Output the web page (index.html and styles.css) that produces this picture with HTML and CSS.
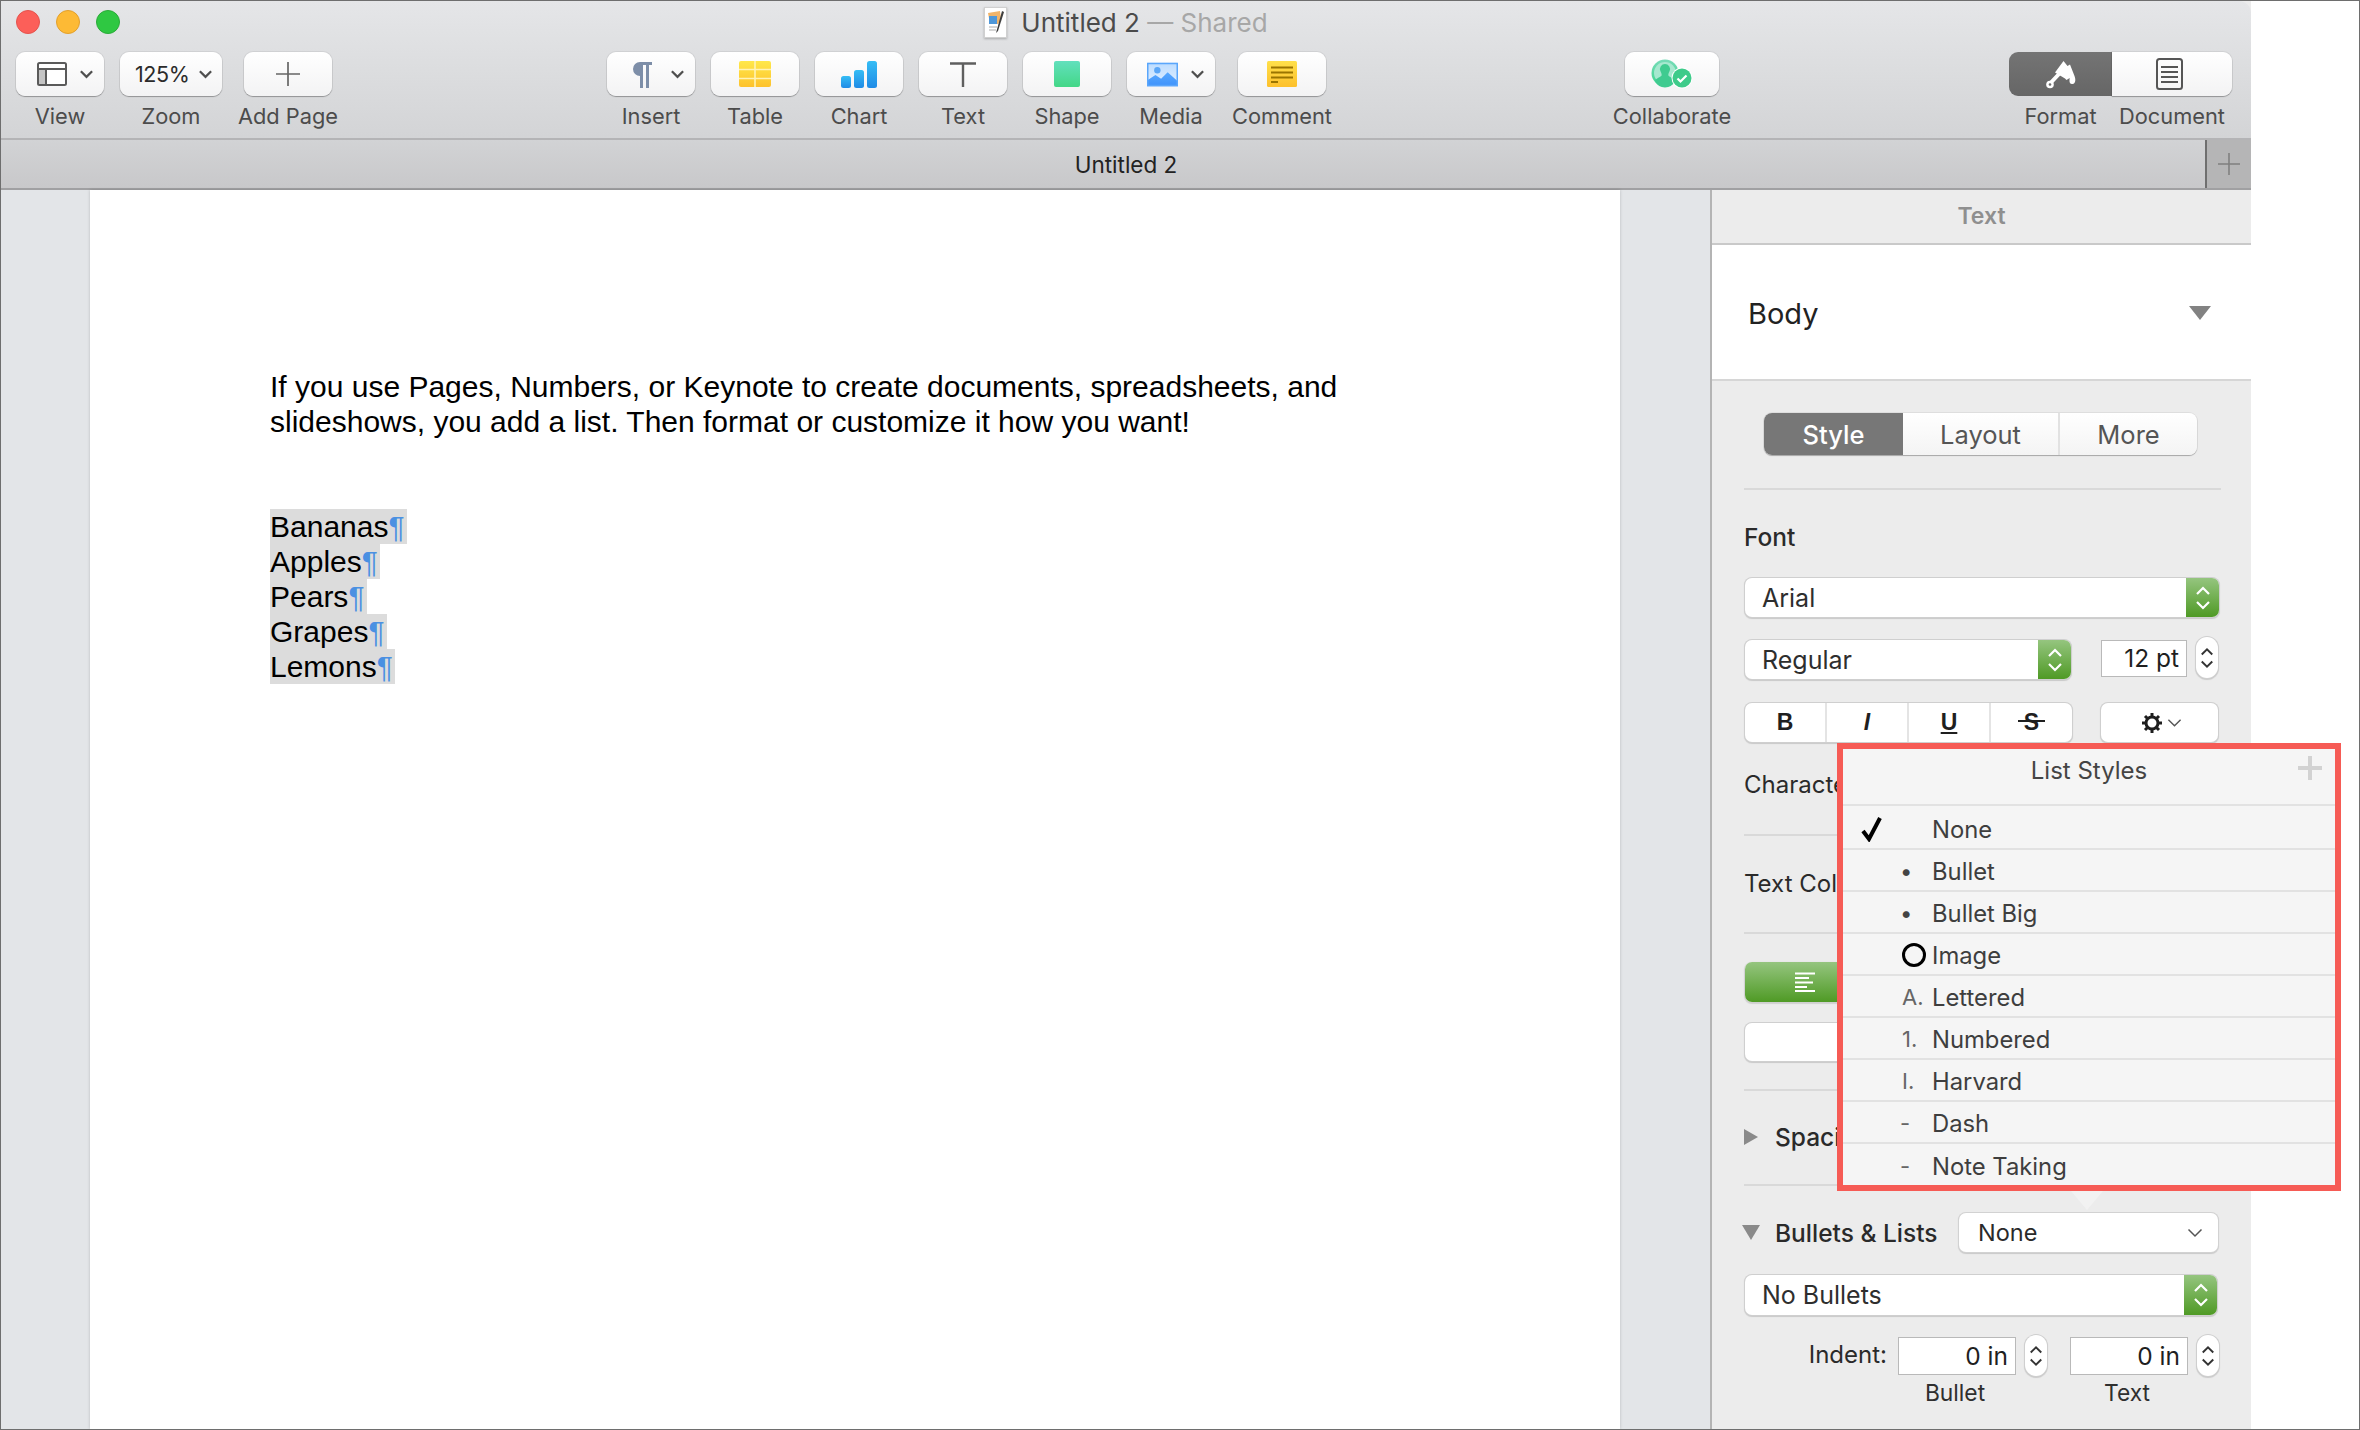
FILE: index.html
```html
<!DOCTYPE html>
<html lang="en">
<head>
<meta charset="utf-8">
<title>Untitled 2</title>
<link rel="stylesheet" href="styles.css">
</head>
<body>
<svg class="defs" width="0" height="0" aria-hidden="true">
  <defs>
    <symbol id="chev" viewBox="0 0 16 10"><path d="M2 2l6 6 6-6" fill="none" stroke="currentColor" stroke-width="2.4"/></symbol>
    <symbol id="chev-thin" viewBox="0 0 16 10"><path d="M1.500 1.500l6.500 6.500 6.500-6.500" fill="none" stroke="currentColor" stroke-width="1.500"/></symbol>
    <symbol id="updown" viewBox="0 0 16 28"><path d="M2 10l6-6 6 6M2 18l6 6 6-6" fill="none" stroke="currentColor" stroke-width="2.2"/></symbol>
    <symbol id="plus" viewBox="0 0 24 24"><path d="M12 0v24M0 12h24" fill="none" stroke="currentColor" stroke-width="1.7"/></symbol>
    <linearGradient id="gBars" x1="0" y1="0" x2="0" y2="1"><stop offset="0" stop-color="#35bdf5"/><stop offset="1" stop-color="#1f8be6"/></linearGradient>
    <linearGradient id="gShape" x1="0" y1="0" x2="0" y2="1"><stop offset="0" stop-color="#62e0bd"/><stop offset="1" stop-color="#43d787"/></linearGradient>
    <linearGradient id="gTable" x1="0" y1="0" x2="0" y2="1"><stop offset="0" stop-color="#ffe84a"/><stop offset="1" stop-color="#fdc22d"/></linearGradient>
    <linearGradient id="gNote" x1="0" y1="0" x2="0" y2="1"><stop offset="0" stop-color="#ffe04a"/><stop offset="1" stop-color="#fdc02c"/></linearGradient>
    <linearGradient id="gSky" x1="0" y1="0" x2="0" y2="1"><stop offset="0" stop-color="#bcdcff"/><stop offset="1" stop-color="#e2f0ff"/></linearGradient>
    <linearGradient id="gHill" x1="0" y1="0" x2="0" y2="1"><stop offset="0" stop-color="#58a9ff"/><stop offset="1" stop-color="#3f92fb"/></linearGradient>
    <linearGradient id="gColl" x1="0" y1="0" x2="0" y2="1"><stop offset="0" stop-color="#77dbb8"/><stop offset="1" stop-color="#3dd58e"/></linearGradient>
  </defs>
</svg>
<div class="frame">
  <div class="window">
    <header class="toolbar">
      <div class="titlebar">
        <div class="lights">
          <span class="light red"></span><span class="light yellow"></span><span class="light green"></span>
        </div>
        <div class="title">
          <svg class="doc-icon" width="23" height="31" viewBox="0 0 23 31">
            <rect x=".5" y=".5" width="22" height="30" fill="#fff" stroke="#d0d0d0"/>
            <path d="M4 6l12-2 1 8-3 5H6z" fill="#f1b46a"/>
            <rect x="5" y="9" width="8" height="8" fill="#4f97d8"/>
            <path d="M5 20h8M5 23h7" stroke="#c8c8c8" stroke-width="1.4"/>
            <path d="M18 4l2 1-6 19-2 2z" fill="#3f3f3f"/>
          </svg>
          <span class="title-name">Untitled 2</span><span class="title-shared"> — Shared</span>
        </div>
        <div></div>
      </div>
      <div class="tools">
        <div class="tool-group left">
          <div class="tool">
            <div class="btn split view-btn">
              <svg width="30" height="24" viewBox="0 0 30 24"><rect x="1" y="1" width="28" height="22" rx="1.5" fill="#fff" stroke="#5a5a5a" stroke-width="2"/><rect x="2" y="7" width="7" height="15" fill="#c4c4c4"/><path d="M1 7h28M9 7v16" stroke="#5a5a5a" stroke-width="2"/></svg>
              <svg class="chev" width="15" height="10"><use href="#chev"/></svg>
            </div>
            <span class="tool-label">View</span>
          </div>
          <div class="tool zoom">
            <div class="btn split zoom-btn"><span class="zoom-value">125%</span><svg class="chev" width="15" height="10"><use href="#chev"/></svg></div>
            <span class="tool-label">Zoom</span>
          </div>
          <div class="tool addpage">
            <div class="btn"><svg class="plus-icon" width="24" height="24"><use href="#plus"/></svg></div>
            <span class="tool-label">Add Page</span>
          </div>
        </div>
        <div class="tool-group middle">
          <div class="tool">
            <div class="btn split insert-btn">
              <svg width="25" height="27" viewBox="0 0 25 27"><path d="M10 1h14v3h-3v23h-3V4h-3v23h-3V15a7 7 0 0 1 0-14z" fill="#7d8ea8"/></svg>
              <svg class="chev" width="15" height="10"><use href="#chev"/></svg>
            </div>
            <span class="tool-label">Insert</span>
          </div>
          <div class="tool">
            <div class="btn">
              <svg width="32" height="26" viewBox="0 0 32 26"><rect width="32" height="26" rx="2" fill="url(#gTable)"/><path d="M0 8.5h32M0 17.5h32M16 0v26" stroke="#fff3b5" stroke-width="1.6"/></svg>
            </div>
            <span class="tool-label">Table</span>
          </div>
          <div class="tool">
            <div class="btn">
              <svg width="36" height="27" viewBox="0 0 36 27"><rect x="0" y="15" width="10" height="12" rx="2.5" fill="url(#gBars)"/><rect x="13" y="9" width="10" height="18" rx="2.5" fill="url(#gBars)"/><rect x="26" y="0" width="10" height="27" rx="2.5" fill="url(#gBars)"/></svg>
            </div>
            <span class="tool-label">Chart</span>
          </div>
          <div class="tool">
            <div class="btn">
              <svg width="26" height="25" viewBox="0 0 26 25"><path d="M0 1.5h26M13 1.5V25" fill="none" stroke="#5f5f5f" stroke-width="2.4"/></svg>
            </div>
            <span class="tool-label">Text</span>
          </div>
          <div class="tool">
            <div class="btn">
              <svg width="26" height="26" viewBox="0 0 26 26"><rect width="26" height="26" rx="2" fill="url(#gShape)"/></svg>
            </div>
            <span class="tool-label">Shape</span>
          </div>
          <div class="tool">
            <div class="btn split media-btn">
              <svg width="33" height="25" viewBox="0 0 33 25"><rect width="33" height="25" rx="1" fill="url(#gSky)"/><circle cx="11" cy="8" r="3.4" fill="#5aa6f7"/><path d="M0 19l9-6 6 4 7-7 11 10v5H0z" fill="url(#gHill)"/><rect x=".8" y=".8" width="31.4" height="23.4" fill="none" stroke="#5aa6fb" stroke-width="1.6"/></svg>
              <svg class="chev" width="15" height="10"><use href="#chev"/></svg>
            </div>
            <span class="tool-label">Media</span>
          </div>
          <div class="tool comment">
            <div class="btn">
              <svg width="30" height="26" viewBox="0 0 30 26"><rect width="30" height="26" rx="1.5" fill="url(#gNote)"/><path d="M4 6.5h22M4 11.5h22M4 16.5h22M4 21h7" stroke="#9a7400" stroke-width="2.2"/></svg>
            </div>
            <span class="tool-label">Comment</span>
          </div>
        </div>
        <div class="tool-group collab">
          <div class="tool collab-tool">
            <div class="btn">
              <svg width="42" height="30" viewBox="0 0 42 30"><circle cx="14" cy="14" r="13.5" fill="url(#gColl)"/><circle cx="14" cy="14" r="11" fill="#a6e8cf"/><path d="M14 5a5 5 0 0 1 4.6 7c-.6 1.6-1.3 2.6-1.3 4 0 2 5.6 2.6 6.7 6a11 11 0 0 1-20 0c1.100-3.400 6.700-4 6.700-6 0-1.400-.7-2.400-1.300-4A5 5 0 0 1 14 5z" fill="#3fcb90"/><circle cx="31" cy="19" r="10.500" fill="#fff"/><circle cx="31" cy="19" r="9.500" fill="#3ecb8a"/><path d="M26.500 19.500l3 3 6-6" fill="none" stroke="#fff" stroke-width="2.200"/></svg>
            </div>
            <span class="tool-label">Collaborate</span>
          </div>
        </div>
        <div class="tool-group mode">
          <div class="tool mode-format">
            <div class="btn mode-on">
              <svg width="30" height="29" viewBox="0 0 30 29"><path d="M13 14L5 22.500" stroke="#fff" stroke-width="4" stroke-linecap="round"/><circle cx="4" cy="24.500" r="3.800" fill="#fff"/><circle cx="4" cy="24.500" r="1.300" fill="#6b6b6b"/><path d="M9 12.500L17.500 1l4 5 2.500-1.500 4.500 11.500c1.200 3 1.500 7.500-2 8-2.500.300-3.300-2-3-4.500l.2-1.500-3.200 2-1.500-1.500z" fill="#fff"/></svg>
            </div>
            <span class="tool-label">Format</span>
          </div>
          <div class="tool mode-doc">
            <div class="btn mode-off">
              <svg width="27" height="32" viewBox="0 0 27 32"><rect x="1" y="1" width="25" height="30" rx="2.500" fill="none" stroke="#555" stroke-width="2"/><path d="M5 9h17M5 14h17M5 19h17M5 24h17" stroke="#555" stroke-width="2"/></svg>
            </div>
            <span class="tool-label">Document</span>
          </div>
        </div>
      </div>
    </header>

    <div class="tabbar">
      <div class="tab-title">Untitled 2</div>
      <div class="tab-add"><svg width="22" height="22"><use href="#plus"/></svg></div>
    </div>

    <main class="main">
      <section class="canvas">
        <article class="page">
          <p class="intro">If you use Pages, Numbers, or Keynote to create documents, spreadsheets, and<br>slideshows, you add a list. Then format or customize it how you want!</p>
          <ul class="picks">
            <li><span class="sel">Bananas<i class="pil">¶</i></span></li>
            <li><span class="sel">Apples<i class="pil">¶</i></span></li>
            <li><span class="sel">Pears<i class="pil">¶</i></span></li>
            <li><span class="sel">Grapes<i class="pil">¶</i></span></li>
            <li><span class="sel">Lemons<i class="pil">¶</i></span></li>
          </ul>
        </article>
      </section>

      <aside class="sidebar">
        <div class="side-head">Text</div>
        <div class="style-row">
          <span>Body</span>
          <svg width="22" height="14" viewBox="0 0 22 14"><path d="M0 0h22L11 14z" fill="#828282"/></svg>
        </div>
        <div class="side-body">
          <div class="seg">
            <span class="seg-item on">Style</span><span class="seg-item layout">Layout</span><span class="seg-item more">More</span>
          </div>
          <hr class="sep sep-a">
          <div class="strong font-label">Font</div>
          <div class="select font-sel"><span>Arial</span><span class="cap"><svg width="16" height="28"><use href="#updown"/></svg></span></div>
          <div class="font-row">
            <div class="select weight-sel"><span>Regular</span><span class="cap"><svg width="16" height="28"><use href="#updown"/></svg></span></div>
            <div class="field size-field">12 pt</div>
            <div class="stepper"><svg width="14" height="30" viewBox="0 0 16 28"><use href="#updown"/></svg></div>
          </div>
          <div class="format-row">
            <div class="bius">
              <span class="b">B</span><span class="i">I</span><span class="u">U</span><span class="s">S</span>
            </div>
            <div class="gear">
              <svg width="22" height="22" viewBox="0 0 22 22"><circle cx="11" cy="11" r="6" fill="none" stroke="#1e1e1e" stroke-width="3"/><path d="M11 1v4M11 17v4M1 11h4M17 11h4M4 4l3 3M15 15l3 3M18 4l-3 3M7 15l-3 3" stroke="#1e1e1e" stroke-width="3"/></svg>
              <svg class="chev-thin" width="15" height="10"><use href="#chev-thin"/></svg>
            </div>
          </div>
          <div class="label char-label">Character Styles</div>
          <hr class="sep sep-b">
          <div class="label color-label">Text Color</div>
          <hr class="sep sep-c">
          <div class="align-btn">
            <span class="align-on">
              <svg width="20" height="20" viewBox="0 0 20 20"><path d="M0 1.500h20M0 6h14M0 10.500h18M0 15h12M0 19h20" stroke="#fff" stroke-width="1.800"/></svg>
            </span>
          </div>
          <div class="blank-btn"></div>
          <hr class="sep sep-d">
          <div class="spacing-row"><svg width="14" height="16" viewBox="0 0 14 16"><path d="M0 0l14 8L0 16z" fill="#8a8a8a"/></svg><span class="strong">Spacing</span></div>
          <hr class="sep sep-e">
          <div class="bullets-row">
            <svg width="18" height="15" viewBox="0 0 18 15"><path d="M0 0h18L9 15z" fill="#8a8a8a"/></svg>
            <span class="strong">Bullets &amp; Lists</span>
            <div class="menu-btn"><span>None</span><svg class="chev-thin" width="16" height="10"><use href="#chev-thin"/></svg></div>
          </div>
          <div class="select nobullets"><span>No Bullets</span><span class="cap"><svg width="16" height="28"><use href="#updown"/></svg></span></div>
          <div class="indent-row">
            <span class="label indent-label">Indent:</span>
            <div class="field indent-field">0 in</div>
            <div class="stepper"><svg width="14" height="30" viewBox="0 0 16 28"><use href="#updown"/></svg></div>
            <div class="field indent-field second">0 in</div>
            <div class="stepper"><svg width="14" height="30" viewBox="0 0 16 28"><use href="#updown"/></svg></div>
          </div>
          <div class="indent-captions"><span>Bullet</span><span>Text</span></div>
          <hr class="sep sep-f">
        </div>
      </aside>

      <div class="popup-arrow"></div>
      <div class="popup">
        <div class="popup-head"><span>List Styles</span><svg class="popup-plus" width="24" height="24" viewBox="0 0 24 24"><path d="M12 0v24M0 12h24" stroke="#d2d2d2" stroke-width="4"/></svg></div>
        <ul class="popup-list">
          <li class="first"><span class="check"><svg width="21" height="26" viewBox="0 0 21 26"><path d="M2 15l6 8L19 2" fill="none" stroke="#000" stroke-width="4"/></svg></span><span class="mark"></span><span>None</span></li>
          <li><span class="check"></span><span class="mark dot">•</span><span>Bullet</span></li>
          <li><span class="check"></span><span class="mark dot">•</span><span>Bullet Big</span></li>
          <li><span class="check"></span><span class="mark"><span class="ring"></span></span><span>Image</span></li>
          <li><span class="check"></span><span class="mark num">A.</span><span>Lettered</span></li>
          <li><span class="check"></span><span class="mark num">1.</span><span>Numbered</span></li>
          <li><span class="check"></span><span class="mark num">I.</span><span>Harvard</span></li>
          <li><span class="check"></span><span class="mark">-</span><span>Dash</span></li>
          <li><span class="check"></span><span class="mark">-</span><span>Note Taking</span></li>
        </ul>
      </div>
    </main>
  </div>
</div>
</body>
</html>
```
FILE: styles.css
```css
* { box-sizing: border-box; }
html, body { margin: 0; padding: 0; background: #fff; }
body { font-family: Inter, "Noto Sans", sans-serif; font-size: 21px; color: #2a2a2a; }
.defs { position: absolute; }
.frame { width: 2360px; height: 1430px; border: 1px solid #6e6e6e; overflow: hidden; background: #fff; }
.window { width: 2250px; height: 100%; display: flex; flex-direction: column; background: #ececec; }

/* toolbar */
.toolbar { height: 139px; flex: none; border-bottom: 2px solid #b4b4b6; border-top-right-radius: 12px; background: linear-gradient(#e5e6e8, #d3d4d6); }
.titlebar { height: 42px; display: grid; grid-template-columns: 1fr auto 1fr; align-items: center; }
.lights { display: flex; gap: 16px; padding-left: 15px; }
.light { width: 24px; height: 24px; border-radius: 50%; }
.red { background: #fc5f59; border: 1px solid #e5534d; }
.yellow { background: #fdba35; border: 1px solid #e3a02b; }
.green { background: #2fc842; border: 1px solid #2bab39; }
.title { display: flex; align-items: center; font-size: 26px; white-space: pre; }
.doc-icon { margin-right: 14px; filter: drop-shadow(0 1px 1px rgba(0,0,0,.25)); }
.title-name { color: #4b4b4b; }
.title-shared { color: #a7a7a7; }
.tools { display: flex; align-items: flex-start; margin-top: 9px; }
.tool-group { display: flex; gap: 16px; }
.tool { width: 88px; display: flex; flex-direction: column; align-items: center; }
.tool-label { margin-top: 7px; line-height: 26px; font-size: 21.800px; color: #4c4c4c; white-space: nowrap; }
.btn { width: 100%; height: 44px; display: flex; align-items: center; justify-content: center; gap: 12px; border-radius: 9px; background: linear-gradient(#ffffff, #f3f3f4); box-shadow: 0 0 0 1px rgba(0,0,0,.06), 0 1px 1px rgba(0,0,0,.28); }
.btn.split { justify-content: space-between; padding-right: 10px; }
.view-btn { padding-left: 21px; }
.insert-btn { padding-left: 21px; }
.media-btn { padding-left: 20px; }
.btn.zoom-btn { gap: 0; padding-left: 15px; padding-right: 9px; }
.chev { color: #4f4f4f; flex: none; }
.left { margin-left: 15px; }
.zoom { width: 102px; }
.addpage { margin-left: 6px; }
.zoom-value { font-size: 21.500px; color: #2b2b2b; letter-spacing: -.4px; }
.plus-icon { color: #666; }
.middle { margin-left: 275px; }
.comment { margin-left: 7px; }
.collab { margin-left: 299px; }
.collab-tool { width: 94px; }
.mode { margin-left: 290px; gap: 0; }
.mode-format { width: 103px; }
.mode-doc { width: 120px; }
.mode-on { background: linear-gradient(#747474, #666); border-radius: 9px 0 0 9px; box-shadow: none; }
.mode-off { border-radius: 0 9px 9px 0; padding-right: 5px; }

/* tab bar */
.tabbar { height: 50px; flex: none; display: flex; border-bottom: 2px solid #a0a0a2; background: linear-gradient(#d2d3d5, #c8c8ca); }
.tab-title { flex: 1; padding-left: 46px; text-align: center; line-height: 50px; font-size: 22.500px; color: #222; }
.tab-add { width: 46px; display: flex; align-items: center; justify-content: center; background: #b5b5b6; border-left: 2px solid #6f6f6f; color: #7f7f7f; }

/* main */
.main { flex: 1; min-height: 0; display: flex; position: relative; }
.canvas { flex: 1; background: #e3e5e8; padding-left: 89px; }
.page { width: 1530px; height: 100%; padding: 179px 0 0 180px; background: #fff; box-shadow: 0 0 3px rgba(0,0,0,.18); font-family: "Liberation Sans", Arial, sans-serif; font-size: 30px; line-height: 35px; color: #000; }
.intro { margin: 0 0 70px; }
.picks { list-style: none; margin: 0; padding: 0; }
.picks li { height: 35px; }
.sel { display: inline-block; height: 35px; background: #dcdcdc; padding-right: 2px; }
.pil { font-style: normal; color: #4a90e2; }

/* sidebar */
.sidebar { width: 541px; flex: none; border-left: 2px solid #b4b4b4; background: #ececec; display: flex; flex-direction: column; }
.side-head { height: 55px; flex: none; border-bottom: 2px solid #c9c9c9; text-align: center; line-height: 52px; font-size: 23px; font-weight: 600; color: #8f8f8f; }
.style-row { height: 136px; flex: none; padding: 2px 40px 0 36px; display: flex; align-items: center; justify-content: space-between; background: #fff; border-bottom: 2px solid #d6d6d6; font-size: 29px; color: #222; }
.side-body { padding: 32px 30px 0 32px; flex: 1; }
.seg { margin-left: 20px; width: 433px; height: 42px; display: flex; border-radius: 8px; background: linear-gradient(#fff, #f4f4f4); box-shadow: 0 0 0 1px rgba(0,0,0,.06), 0 1px 1px rgba(0,0,0,.25); overflow: hidden; font-size: 25.500px; color: #555; }
.seg-item { display: flex; align-items: center; justify-content: center; width: 139px; padding-top: 1px; }
.seg-item.on { background: #777; color: #fff; font-weight: 500; }
.seg-item.layout { width: 157px; border-right: 2px solid #e2e2e2; }
.seg-item.more { width: 137px; }
.sep { margin: 0; border: 0; height: 2px; background: #d9d9d9; }
.sep-a { margin-top: 33px; }
.strong { font-weight: 500; font-size: 24.500px; color: #2a2a2a; }
.label { font-size: 24px; color: #2a2a2a; white-space: nowrap; }
.font-label { margin-top: 32px; height: 30px; line-height: 30px; }
.select { position: relative; display: flex; align-items: center; justify-content: space-between; height: 39px; background: #fff; border-radius: 7px; box-shadow: 0 0 0 1px #cfcfcf, 0 1px 1px 1px rgba(0,0,0,.15); font-size: 25px; color: #2e2e2e; padding-left: 17px; overflow: hidden; }
.cap { width: 33px; height: 100%; display: flex; align-items: center; justify-content: center; background: linear-gradient(#95c57f, #4f9a25); color: #fff; }
.font-sel { margin: 26px 1px 0 1px; width: 474px; }
.font-row { margin-top: 23px; display: flex; align-items: flex-start; }
.weight-sel { width: 326px; margin-left: 1px; }
.field { background: #fff; border: 1px solid #b9b9b9; text-align: right; font-size: 24.500px; color: #1f1f1f; }
.size-field { width: 86px; height: 37px; line-height: 35px; padding-right: 7px; margin-left: 30px; }
.stepper { width: 22px; height: 41px; margin-top: -3px; margin-left: 9px; display: flex; align-items: center; justify-content: center; background: #fff; border-radius: 11px; box-shadow: 0 0 0 1px #cfcfcf, 0 1px 1px 1px rgba(0,0,0,.15); color: #333; }
.format-row { margin-top: 24px; display: flex; }
.bius { width: 327px; margin-left: 1px; height: 39px; display: grid; grid-template-columns: 82px 82px 82px 81px; background: #fff; border-radius: 7px; box-shadow: 0 0 0 1px #cfcfcf, 0 1px 1px 1px rgba(0,0,0,.15); font-family: "Liberation Sans", sans-serif; font-size: 23px; font-weight: 700; color: #1f1f1f; }
.bius span { position: relative; display: flex; align-items: center; justify-content: center; border-right: 2px solid #e4e4e4; }
.bius .s { border-right: 0; }
.bius .s::after { content: ""; position: absolute; left: 27px; right: 27px; top: 17px; height: 2px; background: #1f1f1f; }
.bius .i { font-style: italic; }
.bius .u { text-decoration: underline; }
.gear { width: 117px; margin-left: 29px; height: 39px; display: flex; align-items: center; justify-content: center; gap: 4px; padding-left: 4px; background: #fff; border-radius: 7px; box-shadow: 0 0 0 1px #cfcfcf, 0 1px 1px 1px rgba(0,0,0,.15); }
.chev-thin { color: #555; }
.char-label { margin-top: 28px; height: 30px; line-height: 30px; }
.sep-b { margin-top: 34px; }
.color-label { margin-top: 33px; height: 30px; line-height: 30px; }
.sep-c { margin-top: 33px; }
.align-btn { margin: 28px 0 0 1px; height: 40px; border-radius: 7px; background: #fff; overflow: hidden; box-shadow: 0 1px 1px 1px rgba(0,0,0,.12); }
.align-on { display: flex; width: 120px; height: 100%; align-items: center; justify-content: center; background: linear-gradient(#95c57f, #4f9a25); }
.blank-btn { margin: 21px 0 0 1px; height: 38px; border-radius: 7px; background: #fff; box-shadow: 0 0 0 1px #cfcfcf, 0 1px 1px 1px rgba(0,0,0,.15); }
.sep-d { margin-top: 28px; }
.spacing-row { margin-top: 31px; height: 30px; display: flex; align-items: center; gap: 17px; }
.sep-e { margin-top: 32px; }
.bullets-row { margin-top: 27px; display: flex; align-items: center; height: 39px; }
.bullets-row > svg { margin-left: -2px; margin-right: 15px; }
.bullets-row .strong { white-space: nowrap; width: 184px; }
.menu-btn { width: 259px; height: 39px; display: flex; align-items: center; justify-content: space-between; padding: 0 15px 0 19px; background: #fff; border-radius: 7px; box-shadow: 0 0 0 1px #d2d2d2, 0 1px 1px 1px rgba(0,0,0,.15); font-size: 23.500px; color: #2a2a2a; }
.nobullets { margin: 23px 3px 0 1px; height: 40px; width: 472px; }
.indent-row { margin-top: 20px; display: flex; align-items: flex-start; height: 41px; }
.indent-label { width: 143px; text-align: right; line-height: 40px; }
.indent-field { width: 118px; height: 38px; line-height: 36px; padding-right: 7px; margin: 2px 0 0 11px; }
.indent-field.second { margin-left: 23px; }
.indent-row .stepper { margin-top: 0; }
.indent-captions { margin-top: 2px; padding-left: 125px; display: flex; font-size: 22.800px; line-height: 30px; color: #2f2f2f; }
.indent-captions span { width: 172px; text-align: center; }
.sep-f { margin-top: 21px; background: #bdbdbd; }

/* list styles popover */
.popup { position: absolute; left: 1836px; top: 553px; width: 504px; height: 448px; border: 6px solid #f65b55; background: #f5f5f5; }
.popup-head { position: relative; height: 57px; padding-top: 9px; border-bottom: 2px solid #e2e2e2; text-align: center; line-height: 26px; font-size: 24px; color: #444; }
.popup-plus { position: absolute; right: 13px; top: 7px; }
.popup-list { list-style: none; margin: 0; padding: 0; font-size: 23.800px; color: #3e3e3e; }
.popup-list li { height: 42px; display: grid; grid-template-columns: 57px 32px 1fr; align-items: center; padding-top: 2px; border-bottom: 2px solid #e2e2e2; }
.popup-list li.first { margin-top: 2px; }
.popup-list li:last-child { border-bottom: 0; }
.check { display: flex; padding-left: 18px; }
.mark { color: #666; font-size: 22px; display: flex; align-items: center; }
.mark.dot { color: #444; }
.mark.num { padding-left: 2px; }
.ring { width: 24px; height: 24px; border: 3.500px solid #000; border-radius: 50%; flex: none; margin-left: 2px; }
.popup-arrow { position: absolute; left: 2070px; top: 1001px; width: 0; height: 0; border-style: solid; border-width: 19px 16px 0; border-color: #f2f2f2 transparent transparent; }
```
